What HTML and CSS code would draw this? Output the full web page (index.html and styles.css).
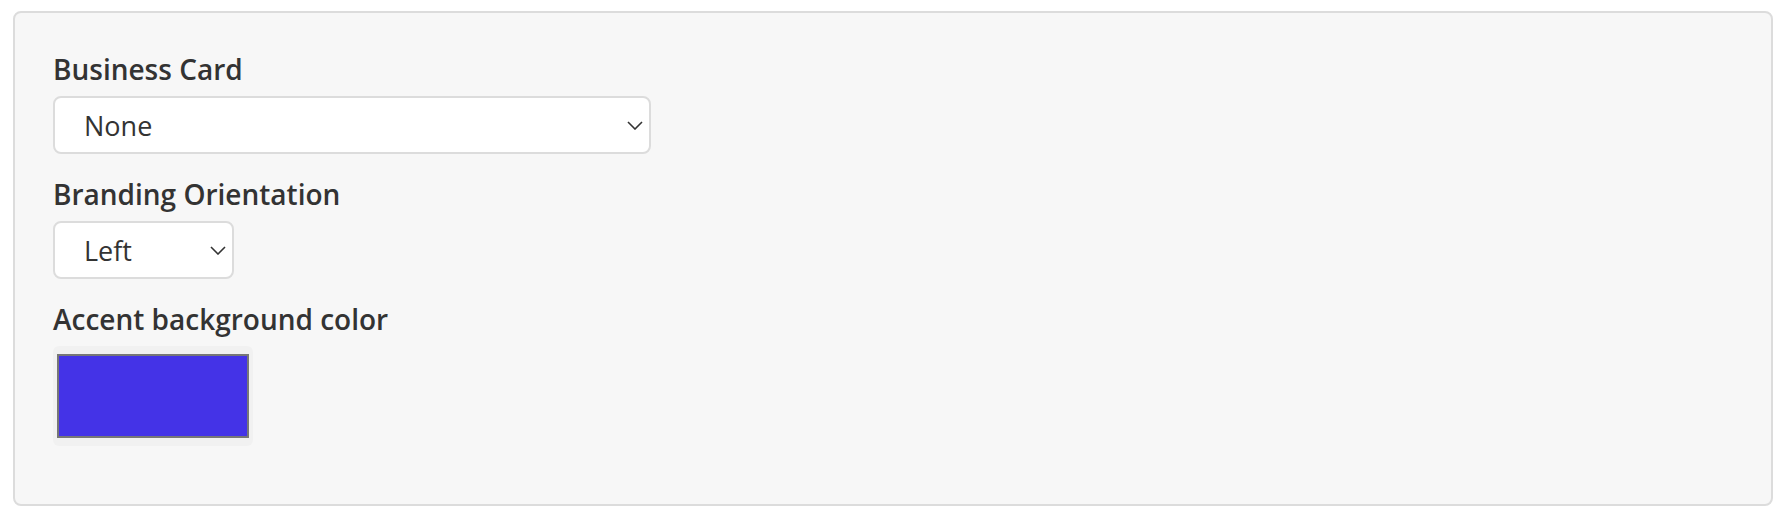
FILE: index.html
```html
<!DOCTYPE html>
<html lang="en">
<head>
    <meta charset="UTF-8">
    <meta name="viewport" content="width=device-width, initial-scale=1.0">
    <title>Card Settings</title>
    <link rel="stylesheet" href="styles.css">
</head>
<body>
    <div class="panel">
        <div class="field">
            <label class="field-label" for="card">Business Card</label>
            <span class="select-wrap wide">
                <select id="card" class="select">
                    <option>None</option>
                </select>
                <svg class="chevron" width="16" height="9" viewBox="0 0 16 9">
                    <path d="M1 1 L8 8 L15 1" fill="none" stroke="#333" stroke-width="1.6"/>
                </svg>
            </span>
        </div>
        <div class="field">
            <label class="field-label" for="orientation">Branding Orientation</label>
            <span class="select-wrap narrow">
                <select id="orientation" class="select">
                    <option>Left</option>
                    <option>Right</option>
                </select>
                <svg class="chevron" width="16" height="9" viewBox="0 0 16 9">
                    <path d="M1 1 L8 8 L15 1" fill="none" stroke="#333" stroke-width="1.6"/>
                </svg>
            </span>
        </div>
        <div class="field">
            <label class="field-label" for="accent">Accent background color</label>
            <input type="color" id="accent" class="color" value="#4433e7">
        </div>
    </div>
</body>
</html>
```

FILE: styles.css
```css
body {
    margin: 0;
    background: #fff;
    font-family: "Open Sans", "Liberation Sans", sans-serif;
    color: #333;
}

.panel {
    margin: 11px 15px 0 13px;
    padding: 38px 38px 58px;
    background: #f7f7f7;
    border: 2px solid #dcdcdc;
    border-radius: 8px;
}

.field {
    margin-bottom: 22px;
}

.field:last-child {
    margin-bottom: 0;
}

.field-label {
    display: block;
    margin-bottom: 9px;
    font-size: 28px;
    line-height: 36px;
    font-weight: 600;
    color: #333;
}

.select-wrap {
    position: relative;
    display: block;
}

.select-wrap.wide {
    width: 598px;
}

.select-wrap.narrow {
    width: 181px;
}

.select {
    display: block;
    width: 100%;
    height: 58px;
    margin: 0;
    padding: 0 40px 0 29px;
    appearance: none;
    -webkit-appearance: none;
    background: #fff;
    border: 2px solid #dcdcdc;
    border-radius: 8px;
    font-family: inherit;
    font-size: 27px;
    color: #333;
}

.chevron {
    position: absolute;
    right: 8px;
    top: 25px;
    pointer-events: none;
}

.color {
    display: block;
    width: 200px;
    height: 100px;
    margin: 0;
    padding: 0;
    border: none;
    border-radius: 6px;
    background: #f1f1f1;
    -webkit-appearance: none;
    appearance: none;
}

.color::-webkit-color-swatch-wrapper {
    padding: 8px 4px;
}

.color::-webkit-color-swatch {
    border: 2px solid #777;
    border-radius: 0;
}
```
